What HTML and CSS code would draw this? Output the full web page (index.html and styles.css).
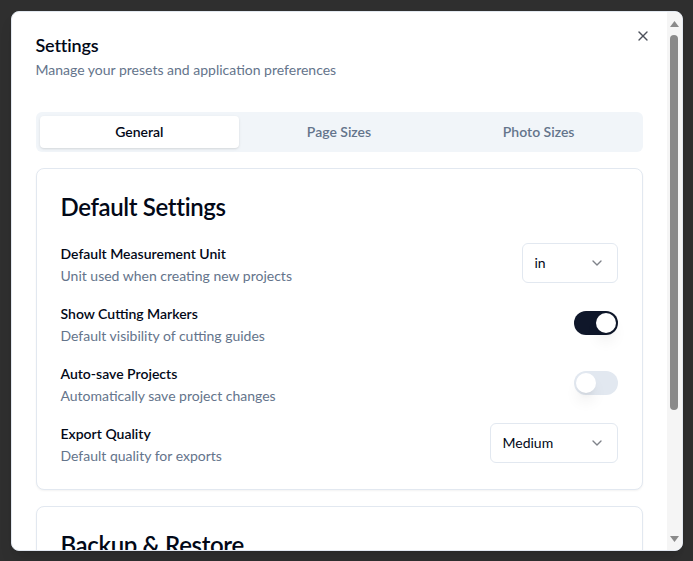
FILE: index.html
```html
<!DOCTYPE html>
<html lang="en">
<head>
<meta charset="utf-8">
<title>Settings</title>
<link rel="stylesheet" href="styles.css">
</head>
<body>
<div class="dialog" role="dialog">
  <div class="dialog-main">
    <button class="close" aria-label="Close">
      <svg width="16" height="16" viewBox="0 0 24 24" fill="none" stroke="currentColor" stroke-width="2" stroke-linecap="round" stroke-linejoin="round"><path d="M18 6 6 18"/><path d="m6 6 12 12"/></svg>
    </button>
    <header class="dialog-header">
      <h2 class="dialog-title">Settings</h2>
      <p class="dialog-desc">Manage your presets and application preferences</p>
    </header>

    <div class="tabs">
      <div class="tab active">General</div>
      <div class="tab">Page Sizes</div>
      <div class="tab">Photo Sizes</div>
    </div>

    <section class="card">
      <h3 class="card-title">Default Settings</h3>
      <div class="card-body">
        <div class="row">
          <div class="row-text">
            <div class="row-label">Default Measurement Unit</div>
            <div class="row-desc">Unit used when creating new projects</div>
          </div>
          <div class="select w-24"><span>in</span>
            <svg class="chev" width="16" height="16" viewBox="0 0 24 24" fill="none" stroke="currentColor" stroke-width="2" stroke-linecap="round" stroke-linejoin="round"><path d="m6 9 6 6 6-6"/></svg>
          </div>
        </div>
        <div class="row">
          <div class="row-text">
            <div class="row-label">Show Cutting Markers</div>
            <div class="row-desc">Default visibility of cutting guides</div>
          </div>
          <div class="switch on"><span class="thumb"></span></div>
        </div>
        <div class="row">
          <div class="row-text">
            <div class="row-label">Auto-save Projects</div>
            <div class="row-desc">Automatically save project changes</div>
          </div>
          <div class="switch"><span class="thumb"></span></div>
        </div>
        <div class="row">
          <div class="row-text">
            <div class="row-label">Export Quality</div>
            <div class="row-desc">Default quality for exports</div>
          </div>
          <div class="select w-32"><span>Medium</span>
            <svg class="chev" width="16" height="16" viewBox="0 0 24 24" fill="none" stroke="currentColor" stroke-width="2" stroke-linecap="round" stroke-linejoin="round"><path d="m6 9 6 6 6-6"/></svg>
          </div>
        </div>
      </div>
    </section>

    <section class="card">
      <h3 class="card-title">Backup &amp; Restore</h3>
    </section>
  </div>

  <div class="scrollbar" aria-hidden="true">
    <svg class="sb-arrow up" width="9" height="6" viewBox="0 0 9 6"><path d="M4.5 0 9 6H0z" fill="currentColor"/></svg>
    <div class="sb-thumb"></div>
    <div class="sb-space"></div>
    <svg class="sb-arrow down" width="9" height="6" viewBox="0 0 9 6"><path d="M0 0h9L4.5 6z" fill="currentColor"/></svg>
  </div>
</div>
</body>
</html>
```
FILE: styles.css
```css
* { box-sizing: border-box; }
html, body { height: 100%; }
body {
  margin: 0;
  background: #2f2f2f;
  font-family: "Lato", "Liberation Sans", sans-serif;
  color: #020817;
  display: flex;
  align-items: center;
  justify-content: center;
}
.dialog {
  width: 672px;
  height: 540px;
  background: #fff;
  border: 1px solid #e2e8f0;
  border-radius: 8px;
  overflow: hidden;
  display: flex;
  box-shadow: 0 10px 15px -3px rgba(0,0,0,.1), 0 4px 6px -4px rgba(0,0,0,.1);
}
.dialog-main {
  position: relative;
  flex: 1;
  min-width: 0;
  padding: 24px;
  overflow: hidden;
}
.close {
  position: absolute;
  top: 16px;
  right: 16px;
  width: 16px;
  height: 16px;
  padding: 0;
  border: 0;
  background: none;
  color: #020817;
  opacity: .7;
  display: flex;
}
.dialog-header { display: flex; flex-direction: column; gap: 6px; }
.dialog-title {
  margin: 0;
  font-size: 18px;
  line-height: 18px;
  font-weight: 600;
  letter-spacing: -0.01em;
}
.dialog-desc {
  margin: 0;
  font-size: 14px;
  line-height: 20px;
  color: #64748b;
}
.tabs {
  margin-top: 32px;
  height: 40px;
  padding: 4px;
  background: #f1f5f9;
  border-radius: 6px;
  display: grid;
  grid-template-columns: repeat(3, 1fr);
}
.tab {
  display: flex;
  align-items: center;
  justify-content: center;
  border-radius: 4px;
  font-size: 14px;
  font-weight: 600;
  color: #64748b;
}
.tab.active {
  background: #fff;
  color: #020817;
  box-shadow: 0 1px 3px rgba(0,0,0,.1), 0 1px 2px -1px rgba(0,0,0,.1);
}
.card {
  margin-top: 16px;
  border: 1px solid #e2e8f0;
  border-radius: 8px;
  background: #fff;
  box-shadow: 0 1px 2px rgba(0,0,0,.05);
}
.card-title {
  margin: 0;
  padding: 26px 24px 22px;
  font-size: 24px;
  line-height: 24px;
  font-weight: 600;
  letter-spacing: -0.015em;
}
.card-body {
  padding: 0 24px 24px;
  display: flex;
  flex-direction: column;
  gap: 16px;
}
.row {
  display: flex;
  align-items: center;
  justify-content: space-between;
}
.row-label {
  font-size: 14px;
  line-height: 25px;
  font-weight: 600;
}
.row-desc {
  font-size: 14px;
  line-height: 19px;
  color: #64748b;
}
.select {
  height: 40px;
  border: 1px solid #e2e8f0;
  border-radius: 6px;
  padding: 0 12px;
  display: flex;
  align-items: center;
  justify-content: space-between;
  font-size: 14px;
}
.w-24 { width: 96px; }
.w-32 { width: 128px; }
.chev { opacity: .5; }
.switch {
  width: 44px;
  height: 24px;
  border: 2px solid transparent;
  border-radius: 999px;
  background: #e2e8f0;
  display: flex;
  align-items: center;
}
.switch.on { background: #0f172a; }
.thumb {
  width: 20px;
  height: 20px;
  border-radius: 50%;
  background: #fff;
  box-shadow: 0 10px 15px -3px rgba(0,0,0,.1), 0 4px 6px -4px rgba(0,0,0,.1);
}
.switch.on .thumb { margin-left: 20px; }

.scrollbar {
  width: 15px;
  flex: none;
  background: #f5f5f5;
  display: flex;
  flex-direction: column;
  align-items: center;
  color: #8a8a8a;
}
.sb-arrow { flex: none; display: block; }
.sb-arrow.up { margin-top: 9px; }
.sb-arrow.down { margin-bottom: 8px; }
.sb-thumb {
  flex: none;
  margin-top: 8px;
  width: 8px;
  height: 375px;
  border-radius: 4px;
  background: #8a8a8a;
}
.sb-space { flex: 1; }
```
